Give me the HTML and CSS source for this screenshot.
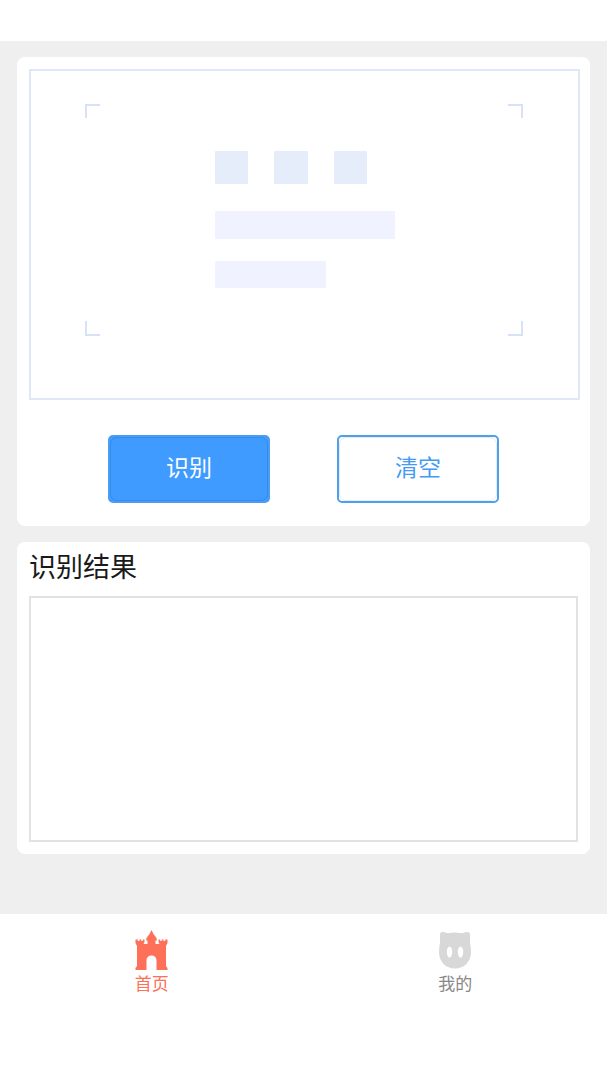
FILE: index.html
```html
<!DOCTYPE html>
<html lang="zh-CN">
<head>
    <meta charset="UTF-8">
    <meta name="viewport" content="width=device-width, initial-scale=1.0">
    <title>识别</title>
    <link rel="stylesheet" href="styles.css">
</head>
<body>

    <header class="top-bar"></header>

    <main class="content">
        <!-- Image to recognise -->
        <section class="card upload-card">
            <button type="button" class="upload" id="upload-btn" aria-label="选择图片">
                <svg class="upload-art" viewBox="0 0 547 327" aria-hidden="true">
                    <g fill="none" stroke="#d8e2f6" stroke-width="2">
                        <path d="M55 47V34H69"/>
                        <path d="M477 34H491V47"/>
                        <path d="M55 250V264H69"/>
                        <path d="M477 264H491V250"/>
                    </g>
                    <g fill="#e5edfb">
                        <rect x="184" y="80" width="33" height="33" rx="1"/>
                        <rect x="243" y="80" width="34" height="33" rx="1"/>
                        <rect x="303" y="80" width="33" height="33" rx="1"/>
                    </g>
                    <g fill="#f0f3ff">
                        <rect x="184" y="140" width="180" height="28" rx="1"/>
                        <rect x="184" y="190" width="111" height="27" rx="1"/>
                    </g>
                </svg>
            </button>

            <div class="actions">
                <button type="button" class="btn btn-primary" id="scan-btn">识别</button>
                <button type="button" class="btn btn-plain" id="clear-btn">清空</button>
            </div>
        </section>

        <!-- Recognised text -->
        <section class="card result-card">
            <label class="result-title" for="result">识别结果</label>
            <textarea class="result" id="result" readonly></textarea>
        </section>
    </main>

    <nav class="tab-bar">
        <a class="tab active" href="#home">
            <svg class="tab-icon" viewBox="0 0 40 42" aria-hidden="true">
                <path fill="currentColor" d="M19.500 1L21.500 5L24.500 9L25 11.500H23.500V15H27.500L26.500 13V10.500H28.200V12H29.700V10.500H31.500V12H33.200V10.500H35.500V14L34 17V37L35.500 39V41H24.500V31Q24 26.500 19.500 26.500Q15 26.500 14.500 31V41H3.500V39L5 37V17L3.500 14V10.500H5.800V12H7.500V10.500H9.300V12H10.800V10.500H12.500V13L11.500 15H15.500V11.500H14L14.500 9L17.500 5Z"/>
            </svg>
            <span>首页</span>
        </a>
        <a class="tab" href="#mine">
            <svg class="tab-icon" viewBox="0 0 40 42" aria-hidden="true">
                <path fill="#d8d8d8" d="M5 6Q5 2.500 8 3Q10.500 3.200 13 4.300Q20 2.800 27 4.300Q29.500 3.200 32 3Q35 2.500 35 6V14Q36 18 36 23C36 33 29 39.500 20 39.500S4 33 4 23Q4 18 5 14Z"/>
                <ellipse cx="14.500" cy="23" rx="2.700" ry="5.500" fill="#fff"/>
                <ellipse cx="25.500" cy="23" rx="2.700" ry="5.500" fill="#fff"/>
            </svg>
            <span>我的</span>
        </a>
    </nav>

    <script>
        const result = document.getElementById('result');

        // Empty the result box
        document.getElementById('clear-btn').addEventListener('click', () => {
            result.value = '';
        });
    </script>
</body>
</html>
```
FILE: styles.css
```css
* {
    box-sizing: border-box;
}

body {
    display: flex;
    flex-direction: column;
    min-height: 100vh;
    margin: 0;
    background-color: #fff;
    font-family: "Noto Sans CJK SC", sans-serif;
}

button, textarea {
    font-family: inherit;
}

.top-bar {
    height: 41px;
}

.content {
    flex: 1;
    display: flex;
    flex-direction: column;
    gap: 16px;
    padding: 16px 17px;
    background-color: #efefef;
}

.card {
    border-radius: 8px;
    background-color: #fff;
}

.upload-card {
    padding: 12px 10px 23px 12px;
}

.upload {
    display: block;
    width: 100%;
    padding: 0;
    border: 2px solid #dfe8f9;
    background-color: #fff;
    cursor: pointer;
}

.upload-art {
    display: block;
    width: 100%;
}

.actions {
    display: flex;
    justify-content: center;
    gap: 67px;
    margin-top: 35px;
    padding-right: 2px;
}

.btn {
    position: relative;
    width: 162px;
    height: 68px;
    padding: 0 0 6px;
    border-radius: 5px;
    font-size: 23px;
    cursor: pointer;
}

/* thin rounded line inside the border */
.btn::before {
    content: "";
    position: absolute;
    inset: 0;
    border: 1px solid;
    border-radius: 7px;
}

.btn-primary {
    border: 2px solid #4a9df5;
    background-color: #3f9bff;
    color: #fff;
}

.btn-primary::before {
    border-color: #368be9;
}

.btn-plain {
    border: 2px solid #519ee9;
    background-color: #fff;
    color: #439bf5;
}

.btn-plain::before {
    border-color: #e3ebf3;
}

.result-card {
    padding: 4px 12px 12px;
}

.result-title {
    display: block;
    margin-bottom: 10px;
    color: #1a1a1a;
    font-size: 27px;
    line-height: 40px;
}

.result {
    display: block;
    width: 100%;
    height: 246px;
    padding: 8px;
    border: 2px solid #e2e2e2;
    background-color: #fff;
    font-size: 20px;
    resize: none;
    outline: none;
}

.tab-bar {
    display: flex;
    height: 166px;
    padding-top: 15px;
    background-color: #fff;
}

.tab {
    flex: 1;
    display: flex;
    flex-direction: column;
    align-items: center;
    color: #888;
    font-size: 17px;
    line-height: 24px;
    text-decoration: none;
}

.tab.active {
    color: #ff7058;
}

.tab-icon {
    width: 40px;
    height: 42px;
}
```
